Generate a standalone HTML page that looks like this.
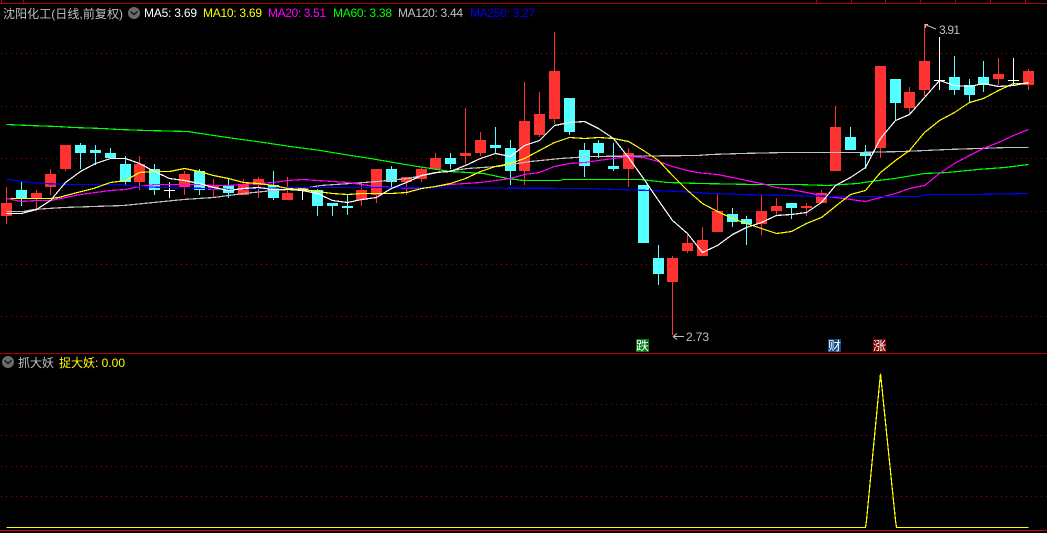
<!DOCTYPE html>
<html><head><meta charset="utf-8"><style>
html,body{margin:0;padding:0;background:#000;width:1047px;height:533px;overflow:hidden}
svg{display:block}
text{font-family:"Liberation Sans","WenQuanYi Zen Hei","Noto Sans CJK SC",sans-serif;font-size:12px}
.l{fill:none;stroke-width:1.2;shape-rendering:crispEdges}
.g{stroke:#a00000;stroke-width:1;stroke-dasharray:1 4;shape-rendering:crispEdges}
</style></head><body>
<svg width="1047" height="533" viewBox="0 0 1047 533" xmlns="http://www.w3.org/2000/svg">
<rect width="1047" height="533" fill="#000"/>
<g fill="#b00000" shape-rendering="crispEdges">
<rect x="0" y="3" width="1047" height="1"/><rect x="0" y="353" width="1047" height="1"/><rect x="0" y="530" width="1047" height="1" fill="#d00000"/>
<rect x="1" y="0" width="1" height="3"/><rect x="23" y="0" width="1" height="3"/><rect x="816" y="0" width="1" height="3"/><rect x="851" y="0" width="1" height="3"/><rect x="885" y="0" width="1" height="3"/><rect x="920" y="0" width="1" height="3"/><rect x="955" y="0" width="1" height="3"/><rect x="990" y="0" width="1" height="3"/><rect x="1025" y="0" width="1" height="3"/>
</g>
<path class="g" d="M1 53.5H1047M1 106.5H1047M1 158.5H1047M1 211.5H1047M1 264.5H1047M1 316.5H1047M1 404.5H1047M1 435.5H1047M1 466.5H1047M1 496.5H1047"/>

<path shape-rendering="crispEdges" fill="#ff3232" d="M1 203h11V216h-11zM6 187h1V224h-1zM31 193h11V198h-11zM36 190h1V211h-1zM45 174h11V187h-11zM50 169h1V195h-1zM60 145h11V169h-11zM65 145h1V171h-1zM134 164h11V182h-11zM139 156h1V190h-1zM179 174h11V187h-11zM184 171h1V195h-1zM208 185h11V190h-11zM213 179h1V198h-1zM238 185h11V195h-11zM243 179h1V195h-1zM253 179h11V185h-11zM258 177h1V198h-1zM282 193h11V200h-11zM287 177h1V200h-1zM356 190h11V200h-11zM361 183h1V206h-1zM371 169h11V195h-11zM376 169h1V203h-1zM401 177h11V182h-11zM406 177h1V195h-1zM416 169h11V179h-11zM421 167h1V182h-1zM430 158h11V169h-11zM435 153h1V169h-1zM460 153h11V156h-11zM465 108h1V164h-1zM475 140h11V153h-11zM480 132h1V156h-1zM519 121h11V171h-11zM524 82h1V185h-1zM534 114h11V135h-11zM539 92h1V137h-1zM549 71h11V119h-11zM554 32h1V124h-1zM623 153h11V169h-11zM628 148h1V187h-1zM667 258h11V282h-11zM672 256h1V335h-1zM682 243h11V251h-11zM687 235h1V253h-1zM697 240h11V256h-11zM702 227h1V256h-1zM712 211h11V232h-11zM717 193h1V232h-1zM756 211h11V224h-11zM761 195h1V235h-1zM771 206h11V211h-11zM776 198h1V215h-1zM801 206h11V208h-11zM806 203h1V216h-1zM816 193h11V203h-11zM821 190h1V203h-1zM830 127h11V171h-11zM835 106h1V171h-1zM875 66h11V148h-11zM880 66h1V158h-1zM904 92h11V108h-11zM909 87h1V114h-1zM919 61h11V90h-11zM924 24h1V96h-1zM993 74h11V79h-11zM998 58h1V85h-1zM1023 71h11V85h-11zM1028 69h1V90h-1z"/>

<path shape-rendering="crispEdges" fill="#54ffff" d="M16 190h11V198h-11zM21 182h1V206h-1zM75 145h11V153h-11zM80 143h1V169h-1zM90 150h11V153h-11zM95 145h1V165h-1zM105 153h11V158h-11zM110 148h1V158h-1zM120 164h11V182h-11zM125 156h1V185h-1zM149 169h11V190h-11zM154 164h1V195h-1zM194 171h11V190h-11zM199 169h1V195h-1zM223 185h11V193h-11zM228 179h1V198h-1zM268 185h11V198h-11zM273 171h1V200h-1zM312 190h11V206h-11zM317 189h1V216h-1zM327 203h11V206h-11zM332 203h1V216h-1zM342 206h11V208h-11zM347 195h1V215h-1zM386 169h11V182h-11zM391 166h1V187h-1zM445 158h11V164h-11zM450 153h1V169h-1zM490 145h11V148h-11zM495 127h1V154h-1zM505 148h11V171h-11zM510 140h1V185h-1zM564 98h11V132h-11zM569 98h1V135h-1zM579 150h11V166h-11zM584 143h1V177h-1zM593 143h11V153h-11zM598 140h1V158h-1zM608 166h11V169h-11zM613 143h1V171h-1zM638 185h11V243h-11zM653 258h11V274h-11zM658 245h1V285h-1zM727 214h11V222h-11zM732 208h1V227h-1zM741 219h11V224h-11zM746 216h1V245h-1zM786 203h11V208h-11zM791 203h1V219h-1zM845 137h11V150h-11zM850 127h1V150h-1zM860 153h11V156h-11zM865 145h1V169h-1zM890 79h11V103h-11zM895 79h1V120h-1zM949 77h11V90h-11zM954 56h1V95h-1zM964 85h11V95h-11zM969 79h1V103h-1zM978 77h11V85h-11zM983 61h1V92h-1z"/>

<path shape-rendering="crispEdges" fill="#fff" d="M164 190h11v1h-11zM169 182h1V198h-1zM297 189h11v1h-11zM302 189h1V200h-1zM934 80h11v1h-11zM939 37h1V90h-1zM1008 80h11v1h-11zM1013 58h1V85h-1z"/>

<g transform="translate(.5 .5)">
<polyline class="l" stroke="#c0c0c0" points="6,211 23,211 33,209 63,207 93,206 123,205 153,202 183,199 213,197 243,193 273,190 303,188 320,185 350,183 377,181 407,178 437,172 467,168 497,166 530,161 560,158 590,156 697,155 710,154 740,153 784,152 857,152 902,151 947,149 1007,147 1028,147"/>
<polyline class="l" stroke="#00ff00" points="6,124 28,125 57,126 73,127 102,128 118,129 147,130 187,131 200,133 227,137 263,142 290,146 320,150 350,155 370,158 393,162 417,166 437,169 450,171 467,172 483,173 507,178 523,180 560,180 563,179 640,179 667,182 700,183 754,184 797,184 827,185 857,183 870,181 894,178 924,173 947,172 977,169 1004,167 1028,164"/>
<polyline class="l" stroke="#ff00ff" points="6,198 21,201 36,200 50,200 65,197 80,194 95,192 110,190 125,189 139,186 154,184 169,184 184,184 199,184 213,185 228,185 243,184 258,183 273,182 287,180 302,179 317,180 332,181 347,182 361,184 376,186 391,187 406,188 421,188 435,186 450,184 465,183 480,182 495,180 510,178 524,174 539,172 554,166 569,163 584,162 598,160 613,158 628,156 643,157 658,161 672,166 687,170 697,172 717,174 732,177 746,180 761,183 776,187 791,189 806,192 821,195 835,197 850,199 865,201 880,197 895,193 909,188 924,185 939,173 954,163 969,155 983,148 998,142 1013,135 1028,129"/>
<polyline class="l" stroke="#0000ff" points="6,179 15,180 30,182 43,183 72,184 87,184 117,184 140,186 163,187 207,188 230,189 253,188 287,187 350,187 590,188 617,189 650,190 680,191 697,192 710,193 740,194 784,195 837,196 917,196 930,194 974,194 1028,193"/>
<polyline class="l" stroke="#ffff00" points="10,198 21,198 36,198 50,198 58,197 77,192 93,188 110,182 125,180 139,172 154,171 169,171 184,168 199,171 213,175 228,178 243,182 258,183 273,185 287,188 302,189 317,191 332,193 347,194 361,193 376,193 391,193 406,192 421,188 435,186 450,183 465,178 480,171 495,166 510,163 524,158 539,150 554,142 569,137 584,138 598,137 613,138 628,141 643,150 658,160 672,175 687,190 702,203 717,211 732,218 746,223 761,228 776,233 791,231 806,223 821,217 836,205 850,194 865,190 880,172 895,160 909,150 924,132 939,120 954,112 969,102 983,98 998,90 1013,83 1028,83"/>
<polyline class="l" stroke="#ffffff" points="6,213 21,213 36,209 50,200 65,182 80,171 95,163 110,158 125,158 139,163 154,171 169,178 184,180 199,183 213,187 228,190 243,188 258,187 273,189 287,189 302,190 317,193 332,200 347,202 361,199 376,197 391,188 406,182 421,175 435,172 450,171 465,165 480,158 495,153 510,156 524,145 539,140 554,125 569,122 584,121 598,128 613,138 628,157 643,178 658,200 672,220 687,233 702,252 717,245 732,234 746,227 761,222 776,215 791,214 806,212 821,202 835,185 850,177 865,167 880,138 895,120 909,114 924,97 939,80 954,85 969,86 983,83 998,86 1013,85 1028,82"/>
<polyline class="l" stroke="#ffff00" points="6,527 865,527 866,520 880,373 895,520 896,527 1028,527"/>
</g>

<rect x="636" y="339" width="13" height="13" fill="#007a10"/>
<rect x="828" y="339" width="13" height="13" fill="#0f4a80"/>
<rect x="873" y="339" width="13" height="13" fill="#800000"/>
<text x="636" y="350" fill="#fff" textLength="13" lengthAdjust="spacingAndGlyphs">跌</text>
<text x="828" y="350" fill="#fff" textLength="13" lengthAdjust="spacingAndGlyphs">财</text>
<text x="873" y="350" fill="#fff" textLength="13" lengthAdjust="spacingAndGlyphs">涨</text>

<path d="M925 24.5h3M925.5 24v4M926 25l10 4" stroke="#c0c0c0" fill="none" stroke-width="1"/>
<text x="939" y="34" fill="#c0c0c0" textLength="21" lengthAdjust="spacing">3.91</text>
<path d="M673 336.5h11M673 336.5l4-3M673 336.5l4 3" stroke="#c0c0c0" fill="none" stroke-width="1"/>
<text x="686" y="341" fill="#c0c0c0" textLength="23" lengthAdjust="spacing">2.73</text>

<text x="3" y="18" fill="#c0c0c0" textLength="120" lengthAdjust="spacing">沈阳化工(日线,前复权)</text>
<circle cx="134" cy="13" r="6" fill="#6a6a6a"/>
<path d="M130.5 11.5l3.5 3 3.5-3" stroke="#111" fill="none" stroke-width="1.3"/>
<text x="144" y="17" fill="#fff" textLength="53" lengthAdjust="spacing">MA5: 3.69</text>
<text x="203" y="17" fill="#ffff00" textLength="59" lengthAdjust="spacing">MA10: 3.69</text>
<text x="268" y="17" fill="#ff00ff" textLength="58" lengthAdjust="spacing">MA20: 3.51</text>
<text x="333" y="17" fill="#00ff00" textLength="59" lengthAdjust="spacing">MA60: 3.38</text>
<text x="398" y="17" fill="#c0c0c0" textLength="65" lengthAdjust="spacing">MA120: 3.44</text>
<text x="470" y="17" fill="#0000ff" textLength="65" lengthAdjust="spacing">MA250: 3.27</text>

<circle cx="8" cy="362" r="6" fill="#6a6a6a"/>
<path d="M4.5 360.5l3.5 3 3.5-3" stroke="#111" fill="none" stroke-width="1.3"/>
<text x="18" y="367" fill="#c0c0c0" textLength="36" lengthAdjust="spacing">抓大妖</text>
<text x="59" y="367" fill="#ffff00" textLength="66" lengthAdjust="spacing">捉大妖: 0.00</text>
</svg>
</body></html>
